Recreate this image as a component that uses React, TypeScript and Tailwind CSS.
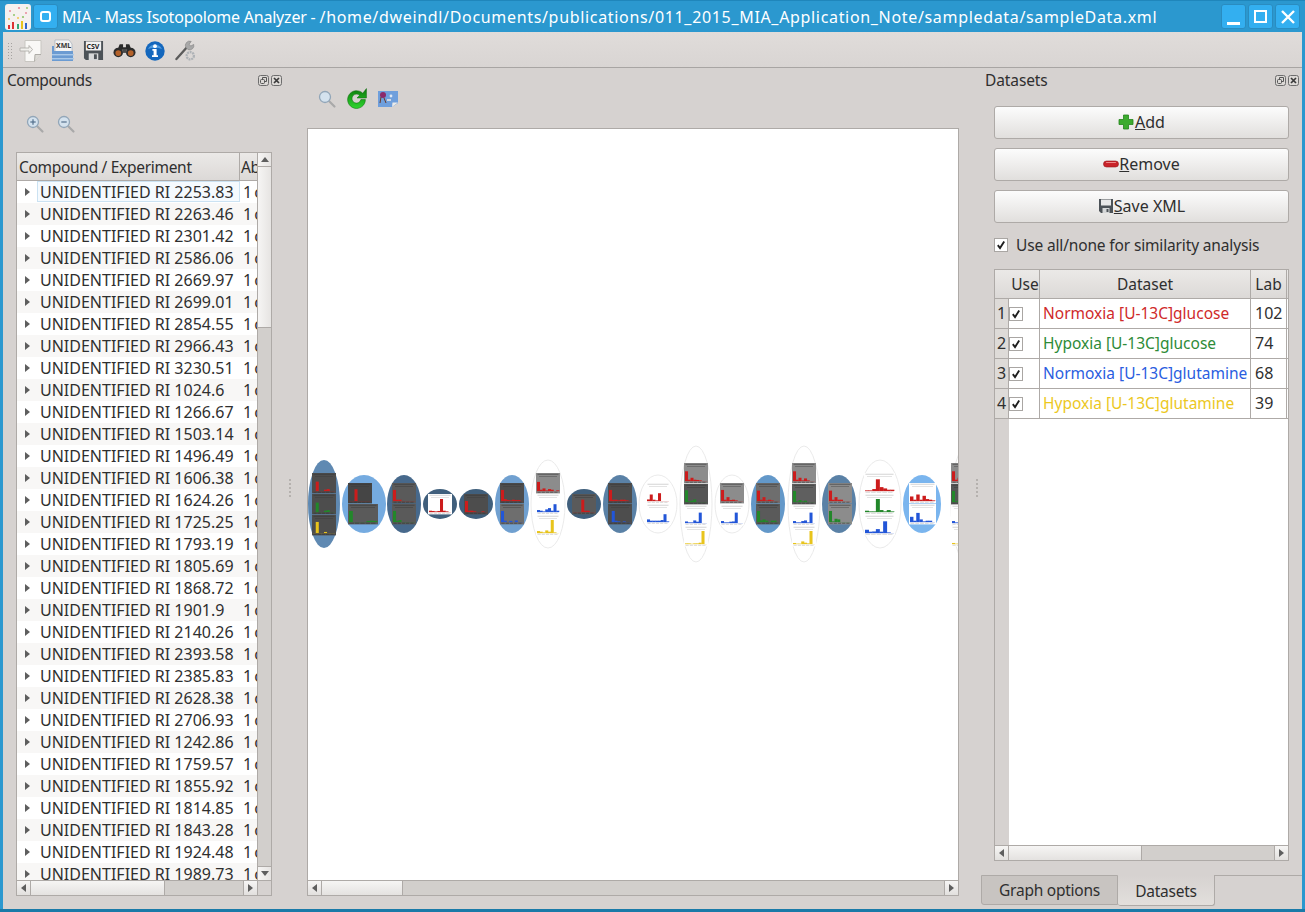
import React from "react";

const rows = ["2253.83","2263.46","2301.42","2586.06","2669.97","2699.01","2854.55","2966.43","3230.51","1024.6","1266.67","1503.14","1496.49","1606.38","1624.26","1725.25","1793.19","1805.69","1868.72","1901.9","2140.26","2393.58","2385.83","2628.38","2706.93","1242.86","1759.57","1855.92","1814.85","1843.28","1924.48","1989.73"];

const R = "#cc1f1f", G = "#23872b", B = "#2456d8", Y = "#e8c41c";
type P = { x: number; y: number; w?: number; c: string; bg: string; b: number[] };
type N = { cx: number; rx: number; ry: number; fill: string; p: P[] };
const D = "#4e4e4e", L = "#8c8c8c", W = "#ffffff", M = "#6e6e6e";
const nodes: N[] = [
  { cx: 324, rx: 16, ry: 44, fill: "#5f89b2", p: [
    { x: 312, y: 473, c: R, bg: D, b: [0, .72, 0, 0, .1, .15, 0, 0] },
    { x: 312, y: 494, c: G, bg: D, b: [0, .72, 0, 0, .1, .15, 0, 0] },
    { x: 312, y: 515, c: Y, bg: D, b: [0, .85, 0, 0, .08, 0, 0, 0] } ] },
  { cx: 364, rx: 22, ry: 29, fill: "#75abe0", p: [
    { x: 348, y: 483, c: R, bg: "#454545", b: [0, 0, .9, 0, 0, 0, 0, 0] },
    { x: 348, y: 504, w: 30, c: G, bg: "#5a5a5a", b: [.85, 0, 0, 0, 0, .08, .1, .08] } ] },
  { cx: 404, rx: 17, ry: 29, fill: "#46698c", p: [
    { x: 392, y: 483, c: R, bg: "#5a5a5a", b: [.85, .1, .1, 0, 0, 0, 0, 0] },
    { x: 392, y: 504, c: G, bg: "#5a5a5a", b: [.85, .1, .15, 0, 0, 0, 0, 0] } ] },
  { cx: 440, rx: 17, ry: 15, fill: "#3f5f7c", p: [
    { x: 428, y: 494, c: R, bg: W, b: [.1, .08, .05, .08, 1, .1, .05, 0] } ] },
  { cx: 476, rx: 17, ry: 15, fill: "#3f5f7c", p: [
    { x: 464, y: 494, c: R, bg: D, b: [.85, .1, .1, .05, 0, 0, .05, 0] } ] },
  { cx: 512, rx: 17, ry: 29, fill: "#6fa0d0", p: [
    { x: 500, y: 483, c: R, bg: D, b: [.85, .15, .08, .05, .1, .08, .08, 0] },
    { x: 500, y: 504, c: B, bg: M, b: [.85, .1, 0, .08, 0, .12, 0, 0] } ] },
  { cx: 548, rx: 17, ry: 44, fill: W, p: [
    { x: 536, y: 473, c: R, bg: L, b: [.7, .1, .2, .05, .15, .1, 0, .05] },
    { x: 536, y: 494, c: B, bg: W, b: [.15, .1, .05, .2, .3, .1, .6, .1] },
    { x: 536, y: 515, c: Y, bg: W, b: [.15, .1, .05, .2, .1, 1, .05, 0] } ] },
  { cx: 584, rx: 17, ry: 15, fill: "#3f5f7c", p: [
    { x: 572, y: 494, c: R, bg: "#5a5a5a", b: [0, 0, 0, .95, .1, .1, 0, 0] } ] },
  { cx: 620, rx: 17, ry: 29, fill: "#5a81a6", p: [
    { x: 608, y: 483, c: R, bg: D, b: [.85, .1, .1, .05, .1, .1, .05, 0] },
    { x: 608, y: 504, c: B, bg: D, b: [0, .85, .1, .05, 0, .05, 0, 0] } ] },
  { cx: 658, rx: 19, ry: 29, fill: W, p: [
    { x: 646, y: 483, c: R, bg: W, b: [.12, .5, .1, .05, .6, 0, 0, 0] },
    { x: 646, y: 504, c: B, bg: W, b: [.2, .1, .1, .1, .1, .15, .6, .05] } ] },
  { cx: 696, rx: 16, ry: 58, fill: W, p: [
    { x: 684, y: 463, c: R, bg: L, b: [.75, .1, .25, .1, .08, .05, 0, 0] },
    { x: 684, y: 484, c: G, bg: "#555555", b: [.9, .05, .1, .2, 0, 0, 0, 0] },
    { x: 684, y: 505, c: B, bg: W, b: [.12, .05, .05, .2, .1, .8, 0, 0] },
    { x: 684, y: 526, c: Y, bg: W, b: [.05, .05, .02, .05, .05, .1, 1, 0] } ] },
  { cx: 732, rx: 17, ry: 29, fill: W, p: [
    { x: 720, y: 483, c: R, bg: L, b: [.85, .1, .3, .08, .1, .05, 0, 0] },
    { x: 720, y: 505, c: B, bg: W, b: [.15, .05, .05, .1, .12, .8, 0, 0] } ] },
  { cx: 768, rx: 17, ry: 29, fill: "#6498c9", p: [
    { x: 756, y: 483, c: R, bg: M, b: [.8, .1, .3, .05, .1, .05, 0, 0] },
    { x: 756, y: 504, c: G, bg: "#5a5a5a", b: [.85, .12, .2, .1, 0, .1, .1, 0] } ] },
  { cx: 804, rx: 16, ry: 58, fill: W, p: [
    { x: 792, y: 463, c: R, bg: L, b: [.75, .1, .25, .05, .2, .05, 0, 0] },
    { x: 792, y: 484, c: G, bg: "#5f5f5f", b: [.85, .05, .15, .05, .1, 0, 0, 0] },
    { x: 792, y: 505, c: B, bg: W, b: [.15, .05, .05, .15, .2, .05, .8, 0] },
    { x: 792, y: 526, c: Y, bg: W, b: [.08, .03, .03, .2, .1, .05, 1, 0] } ] },
  { cx: 839, rx: 17, ry: 29, fill: "#5a81a6", p: [
    { x: 828, y: 483, c: R, bg: L, b: [.8, .1, .3, .1, .1, 0, 0, 0] },
    { x: 828, y: 504, c: G, bg: L, b: [.85, .05, .25, .2, 0, 0, 0, 0] } ] },
  { cx: 880, rx: 21, ry: 44, fill: W, p: [
    { x: 864, y: 473, w: 31, c: R, bg: W, b: [.05, .05, .15, .9, .3, .2, .1, .1] },
    { x: 864, y: 494, w: 31, c: G, bg: W, b: [.1, .05, .05, 1, .15, .05, .15, .05] },
    { x: 864, y: 515, w: 31, c: B, bg: W, b: [.25, .1, .12, .3, .1, .9, .05, 0] } ] },
  { cx: 922, rx: 19, ry: 29, fill: "#7ab5ee", p: [
    { x: 909, y: 483, w: 27, c: R, bg: W, b: [.35, .1, .5, .1, .4, .15, .1, .05] },
    { x: 909, y: 504, w: 27, c: B, bg: W, b: [.4, .1, .7, .2, .05, .1, .1, 0] } ] },
  { cx: 967, rx: 16, ry: 58, fill: W, p: [
    { x: 951, y: 463, c: R, bg: L, b: [.75, .1, .25, .05, .2, .05, 0, 0] },
    { x: 951, y: 484, c: G, bg: "#555555", b: [.85, .05, .15, .05, .1, 0, 0, 0] },
    { x: 951, y: 505, c: B, bg: W, b: [.15, .05, .05, .15, .2, .05, .8, 0] },
    { x: 951, y: 526, c: Y, bg: W, b: [.08, .03, .03, .2, .1, .05, 1, 0] } ] },
];

function Panel({ p }: { p: P }) {
  const w = p.w ?? 24;
  const h = 20.4;
  const dark = p.bg !== W;
  const ink = dark ? "#333333" : "#b4b4b4";
  const slot = (w - 2) / 8;
  return (
    <g>
      <rect x={p.x} y={p.y} width={w} height={h} fill={p.bg} />
      <rect x={p.x + 1.5} y={p.y + 0.8} width={w - 3} height={0.8} fill={ink} opacity={0.7} />
      <rect x={p.x + 3} y={p.y + 3} width={w - 6} height={0.7} fill={ink} opacity={0.5} />
      {p.b.map((v, i) =>
        v > 0 ? <rect key={i} x={p.x + 1 + i * slot} y={p.y + 18 - v * 13} width={slot * 1.1} height={v * 13} fill={p.c} /> : null
      )}
      <rect x={p.x + 1} y={p.y + 18} width={w - 2} height={0.4} fill={p.c} opacity={0.4} />
      {[0, 1, 2, 3, 4].map((i) => (
        <rect key={i} x={p.x + 1.5 + (i * (w - 3)) / 5} y={p.y + 18.8} width={(w - 3) / 5 - 1} height={0.8} fill={ink} opacity={0.7} />
      ))}
    </g>
  );
}

function Graph() {
  return (
    <svg viewBox="308 129 650 752" className="block w-[650px] h-[752px]">
      <defs>
        <filter id="soft" x="-5%" y="-5%" width="110%" height="110%">
          <feGaussianBlur stdDeviation="0.45" />
        </filter>
      </defs>
      <g filter="url(#soft)">
        {nodes.map((n, i) => (
          <g key={i}>
            <ellipse cx={n.cx} cy={504} rx={n.rx} ry={n.ry} fill={n.fill} stroke={n.fill === W ? "#e4e4e4" : "none"} strokeWidth={0.8} />
            {n.p.map((p, j) => <Panel key={j} p={p} />)}
          </g>
        ))}
      </g>
    </svg>
  );
}

function Tri({ dir, className = "" }: { dir: "l" | "r" | "u" | "d"; className?: string }) {
  const pts = { l: "6,1 6,9 1,5", r: "1,1 1,9 6,5", u: "1,6 9,6 5,1", d: "1,1 9,1 5,6" }[dir];
  const box = dir === "l" || dir === "r" ? "0 0 7 10" : "0 0 10 7";
  const cls = dir === "l" || dir === "r" ? "w-[7px] h-[10px]" : "w-[10px] h-[7px]";
  return (
    <svg viewBox={box} className={`${cls} ${className}`}>
      <polygon points={pts} fill="#5e5e5e" />
    </svg>
  );
}

function HScroll({ thumb }: { thumb: string }) {
  return (
    <div className="flex h-[14px] shrink-0 bg-[#d2cfcc]">
      <div className="w-[14px] flex items-center justify-center bg-gradient-to-b from-[#f6f5f4] to-[#e2e0de] border-r border-[#aeaaa7]"><Tri dir="l" /></div>
      <div className={`${thumb} bg-gradient-to-b from-[#f6f5f4] to-[#e4e2e0] border-r border-[#aeaaa7]`} />
      <div className="flex-1" />
      <div className="w-[14px] flex items-center justify-center bg-gradient-to-b from-[#f6f5f4] to-[#e2e0de] border-l border-[#aeaaa7]"><Tri dir="r" /></div>
    </div>
  );
}

function Check() {
  return (
    <div className="w-[14px] h-[14px] bg-white border border-[#a9a6a3] flex items-center justify-center shrink-0">
      <svg viewBox="0 0 10 10" className="w-[10px] h-[10px]">
        <path d="M1.8 5.2 L4 8 L8.2 1.6" fill="none" stroke="#1e1e1e" strokeWidth="1.9" />
      </svg>
    </div>
  );
}

function DockButtons() {
  return (
    <div className="flex gap-[2px]">
      <svg viewBox="0 0 11 11" className="w-[11px] h-[11px]">
        <rect x=".5" y=".5" width="10" height="10" rx="2" fill="#dcd9d6" stroke="#6d6d6d" />
        <rect x="2.5" y="4.5" width="4" height="4" rx="1" fill="none" stroke="#555" />
        <path d="M4.5 4.5 V2.5 H8.5 V6.5 H6.5" fill="none" stroke="#555" />
      </svg>
      <svg viewBox="0 0 11 11" className="w-[11px] h-[11px]">
        <rect x=".5" y=".5" width="10" height="10" rx="2" fill="#dcd9d6" stroke="#6d6d6d" />
        <path d="M3 3 L8 8 M8 3 L3 8" stroke="#3a3a3a" strokeWidth="1.7" />
      </svg>
    </div>
  );
}

function Magnifier({ sign }: { sign?: "+" | "-" }) {
  return (
    <svg viewBox="0 0 20 20" className="w-[20px] h-[20px]">
      <path d="M11.5 11.5 L17.5 17.5" stroke="#a9a9a9" strokeWidth="2.2" strokeLinecap="round" />
      <circle cx="8" cy="8" r="5.5" fill="#d4e2ee" stroke="#92a6b8" strokeWidth="1.3" />
      {sign && <path d="M5.3 8 H10.7" stroke="#52708c" strokeWidth="1.2" />}
      {sign === "+" && <path d="M8 5.3 V10.7" stroke="#52708c" strokeWidth="1.2" />}
    </svg>
  );
}

function Splitter() {
  return (
    <div className="w-[10px] shrink-0 flex flex-col items-center justify-center gap-[2px] pb-[2px]">
      {[0, 1, 2, 3, 4].map((i) => <div key={i} className="w-[2px] h-[2px] bg-[#b5b1ae]" />)}
    </div>
  );
}

function TitleBtn({ children }: { children: React.ReactNode }) {
  return (
    <div className="w-[25px] h-[25px] rounded-[3px] bg-[#33aff0] border border-[#2a8cc0] flex items-center justify-center">
      {children}
    </div>
  );
}

function PushBtn({ icon, u, rest }: { icon: React.ReactNode; u: string; rest: string }) {
  return (
    <div className="h-[33px] w-[295px] rounded-[3px] border border-[#aeaaa7] bg-gradient-to-b from-[#fcfcfc] to-[#e1dfdd] flex items-center justify-center text-[#2f2f2f] pb-[2px]">
      {icon}
      <span><u>{u}</u>{rest}</span>
    </div>
  );
}

const ds = [
  ["1", "Normoxia [U-13C]glucose", "text-[#cf2a2a]", "102"],
  ["2", "Hypoxia [U-13C]glucose", "text-[#2e8b37]", "74"],
  ["3", "Normoxia [U-13C]glutamine", "text-[#2a5de0]", "68"],
  ["4", "Hypoxia [U-13C]glutamine", "text-[#ecc81e]", "39"],
];

export default function App() {
  return (
    <div className="w-[1305px] h-[912px] overflow-hidden flex flex-col bg-[#2b98cf] border-b-[3px] border-b-[#1a7aa8] font-['Noto_Sans',sans-serif] text-[16px] leading-[22px] text-[#2f2f2f]">
      {/* title bar */}
      <div className="h-[32px] shrink-0 flex items-center pl-[5px] pr-[5px] border-t border-[#1f86bb] text-white">
        <svg viewBox="0 0 26 26" className="w-[26px] h-[26px] shrink-0">
          <rect width="26" height="26" rx="3" fill="#f5f1ef" />
          <g fill="#e88a9a"><circle cx="5" cy="7" r="1" /><circle cx="14" cy="4" r="1.1" /><circle cx="21" cy="9" r="1" /></g>
          <g fill="#8fc46a"><circle cx="9" cy="11" r="1" /><circle cx="18" cy="13" r="1.1" /><circle cx="22" cy="4" r=".9" /></g>
          <g fill="#efc34c"><circle cx="13" cy="14" r="1" /><circle cx="4" cy="15" r=".9" /></g>
          <rect x="3" y="21" width="2" height="4" fill="#d33" /><rect x="7" y="18" width="2" height="7" fill="#d33" /><rect x="12" y="20" width="2" height="5" fill="#3a7" /><rect x="16" y="17" width="2" height="8" fill="#e8c41c" /><rect x="20" y="19" width="2" height="6" fill="#36c" />
        </svg>
        <div className="ml-[2px] w-[25px] h-[25px] rounded-[3px] bg-[#33aff0] border border-[#2a8cc0] flex items-center justify-center shrink-0">
          <div className="w-[11px] h-[11px] rounded-[3px] border-[2.5px] border-white" />
        </div>
        <div className="ml-[4px] flex-1 whitespace-nowrap overflow-hidden"><span className="tracking-[-0.2px]">MIA - Mass Isotopolome Analyzer - </span><span className="tracking-[0.67px]">/home/dweindl/Documents/publications/011_2015_MIA_Application_Note/sampledata/sampleData.xml</span></div>
        <div className="flex gap-[2px] shrink-0">
          <TitleBtn><div className="w-[13px] h-[3px] bg-white mt-[13px]" /></TitleBtn>
          <TitleBtn><div className="w-[13px] h-[13px] border-2 border-white" /></TitleBtn>
          <TitleBtn>
            <svg viewBox="0 0 14 14" className="w-[14px] h-[14px]"><path d="M1 1 L13 13 M13 1 L1 13" stroke="#fff" strokeWidth="2.4" /></svg>
          </TitleBtn>
        </div>
      </div>

      {/* window body */}
      <div className="flex-1 min-h-0 mx-[3px] flex flex-col bg-[#d6d2d0]">
        {/* toolbar */}
        <div className="h-[36px] shrink-0 flex items-center bg-gradient-to-b from-[#e0dcda] to-[#d9d5d3] border-b border-[#a8a5a3] pl-[5px] pt-[2px]">
          <div className="grid gap-[2px] w-[4px] mr-[8px] shrink-0 grid-cols-[1px_1px]">
            {Array.from({ length: 12 }).map((_, i) => <div key={i} className="w-[1px] h-[1px] bg-[#a5a2a0]" />)}
          </div>
          <div className="flex items-center gap-[8px] -ml-[1px]">
            <svg viewBox="0 0 24 24" className="w-[24px] h-[24px]">
              <path d="M6 1.5 H22 V15 L15.5 22.5 H6 Z" fill="#f9f8f6" stroke="#c8c6c1" />
              <path d="M15.5 22.5 L16 15.5 H22" fill="#dcdad5" stroke="#aeaca7" />
              <path d="M1 9 H10 V6.5 L13.5 10.5 L10 14.5 V12 H1 Z" fill="#f1f0ed" stroke="#a9a7a2" strokeWidth=".8" />
            </svg>
            <svg viewBox="0 0 24 24" className="w-[24px] h-[24px]">
              <path d="M4 1 H18 L21 5 V13 H4 Z" fill="#f4f4f4" stroke="#9aa6b2" strokeWidth=".6" />
              <path d="M1 7 H3 V12 H22 V22 H1 Z" fill="#6b9bd2" />
              <rect x="1" y="15" width="22" height="1.4" fill="#a9c8e8" />
              <rect x="1" y="19" width="22" height="1.4" fill="#a9c8e8" />
              <text x="5" y="9" fontSize="7" fontWeight="700" fill="#333">XML</text>
            </svg>
            <svg viewBox="0 0 22 22" className="w-[21px] h-[21px]">
              <path d="M1 1 H21 V21 H3 L1 19 Z" fill="#4c5257" />
              <rect x="3" y="1.5" width="16" height="9.5" fill="#f2f2f2" />
              <rect x="6" y="14" width="10" height="7" fill="#d7d9da" />
              <rect x="11.5" y="15" width="3" height="5" fill="#4c5257" />
              <text x="3.6" y="9.2" fontSize="7.4" fontWeight="700" fill="#222">CSV</text>
            </svg>
            <svg viewBox="0 0 24 15" className="w-[23px] h-[15px] ml-[1px]">
              <path d="M7 1 H10.5 V4 H13.5 V1 H17 L19 6 L12 7 L5 6 Z" fill="#2a2a2a" />
              <circle cx="5.5" cy="9.5" r="5" fill="#2c2c2c" />
              <circle cx="18.5" cy="9.5" r="5" fill="#2c2c2c" />
              <circle cx="5.5" cy="10.2" r="3" fill="#b5622a" />
              <circle cx="18.5" cy="10.2" r="3" fill="#b5622a" />
              <rect x="10" y="6" width="4" height="4" fill="#4a4a4a" />
            </svg>
            <svg viewBox="0 0 20 20" className="w-[20px] h-[20px] ml-[1px]">
              <circle cx="10" cy="10" r="9.7" fill="#1467bd" />
              <path d="M3 8 A8 8 0 0 1 17 8 A12 6 0 0 0 3 8Z" fill="#4f9ade" />
              <circle cx="10" cy="5.2" r="1.9" fill="#fff" />
              <path d="M7.4 8 H11.6 V14.2 H13 V16 H7 V14.2 H8.6 V9.8 H7.4Z" fill="#fff" />
            </svg>
            <svg viewBox="0 0 22 22" className="w-[21px] h-[21px] ml-[2px]">
              <path d="M1.5 20 L12.5 7.5" stroke="#5b5b5b" strokeWidth="2.4" strokeLinecap="round" />
              <path d="M11.5 8 A4.5 4.5 0 0 1 17 1.5 L14.8 4.4 L16.5 6.4 L19.6 4.6 A4.5 4.5 0 0 1 13.5 10Z" fill="#a8a8a8" stroke="#7e7e7e" strokeWidth=".6" />
              <circle cx="16" cy="16.5" r="3.8" fill="none" stroke="#aeb2b6" strokeWidth="2.4" strokeDasharray="2 .8" />
            </svg>
          </div>
        </div>

        {/* docks */}
        <div className="flex-1 min-h-0 flex">
          {/* compounds dock */}
          <div className="w-[282px] shrink-0 flex flex-col">
            <div className="h-[24px] shrink-0 flex items-center justify-between pl-[4px] pr-[3px] text-[15.5px] tracking-[-0.45px]">
              <span>Compounds</span>
              <DockButtons />
            </div>
            <div className="h-[60px] shrink-0 flex items-center gap-[11px] pl-[22px] pt-[4px]">
              <Magnifier sign="+" />
              <Magnifier sign="-" />
            </div>
            <div className="ml-[13px] w-[256px] h-[744px] shrink-0 border border-[#aeaaa7] flex flex-col bg-white">
              <div className="flex-1 min-h-0 flex">
                <div className="flex-1 min-w-0 flex flex-col overflow-hidden">
                  <div className="h-[28px] shrink-0 flex bg-gradient-to-b from-[#ebe9e7] to-[#dcd9d7] border-b border-[#aeaaa7] text-[15.5px] tracking-[-0.3px]">
                    <div className="w-[223px] shrink-0 border-r border-[#aeaaa7] pl-[2px] flex items-center">Compound / Experiment</div>
                    <div className="flex-1 overflow-hidden pl-[1px] flex items-center whitespace-nowrap">Abundance</div>
                  </div>
                  <div className="flex-1 min-h-0 overflow-hidden">
                    {rows.map((r, i) => (
                      <div key={r} className={`h-[22px] flex ${i % 2 ? "bg-[#f8f7f6]" : "bg-white"}`}>
                        <div className="w-[20px] shrink-0 flex items-center justify-center"><Tri dir="r" /></div>
                        <div className="w-[203px] shrink-0 pl-[3px] whitespace-nowrap">
                          {i === 0 ? (
                            <div className="-ml-[3px] pl-[2px] h-[21px] border border-[#cbe2f2] bg-[#f5fafe] leading-[20px]">UNIDENTIFIED RI {r}</div>
                          ) : (
                            <>UNIDENTIFIED RI {r}</>
                          )}
                        </div>
                        <div className="flex-1 overflow-hidden pl-[3px] whitespace-nowrap tracking-[-1px]">1 of 3</div>
                      </div>
                    ))}
                  </div>
                </div>
                <div className="w-[14px] shrink-0 flex flex-col border-l border-[#aeaaa7] bg-[#d2cfcc]">
                  <div className="h-[14px] shrink-0 flex items-center justify-center bg-gradient-to-r from-[#f6f5f4] to-[#e6e4e2] border-b border-[#aeaaa7]"><Tri dir="u" /></div>
                  <div className="h-[161px] shrink-0 bg-gradient-to-r from-[#f6f5f4] to-[#e6e4e2] border-b border-[#aeaaa7]" />
                  <div className="flex-1" />
                  <div className="h-[14px] shrink-0 flex items-center justify-center bg-gradient-to-r from-[#f6f5f4] to-[#e6e4e2] border-t border-[#aeaaa7]"><Tri dir="d" /></div>
                </div>
              </div>
              <div className="flex border-t border-[#aeaaa7] bg-[#d6d2d0]">
                <div className="w-[240px] shrink-0"><HScroll thumb="w-[134px]" /></div>
                <div className="flex-1 border-l border-[#aeaaa7]" />
              </div>
            </div>
          </div>

          <Splitter />

          {/* centre */}
          <div className="w-[677px] shrink-0 flex flex-col pl-[12px]">
            <div className="h-[60px] shrink-0 flex items-center gap-[8px] pl-[10px] pt-[1px]">
              <Magnifier />
              <svg viewBox="0 0 22 22" className="w-[23px] h-[23px]">
                <defs>
                  <linearGradient id="rl" x1="0" y1="0" x2="0" y2="1">
                    <stop offset="0" stopColor="#0c7a0c" />
                    <stop offset="1" stopColor="#2fd62f" />
                  </linearGradient>
                </defs>
                <path d="M17 6 A8.5 8.5 0 1 0 19.5 12 H15.2 A4.3 4.3 0 1 1 14 8 L11.5 10.5 H20.5 V1.5 Z" fill="url(#rl)" stroke="#0a6b0a" strokeWidth=".5" />
              </svg>
              <svg viewBox="0 0 22 20" className="w-[22px] h-[20px] ml-[1px]">
                <path d="M1 2 H21 V14 L15 18 H1 Z" fill="#6f9fdc" />
                <path d="M15 18 L15.5 13.5 H21 Z" fill="#ecebe8" />
                <circle cx="6" cy="6" r="3" fill="#8c2a6a" />
                <path d="M4 8 L3 14 M7 9 L9 14" stroke="#6a3a2a" strokeWidth="1" />
                <circle cx="14" cy="7" r="1.4" fill="#dfe8f3" />
                <rect x="10" y="10" width="4" height="2" fill="#cfd7e2" />
              </svg>
            </div>
            <div className="w-[652px] h-[768px] shrink-0 border border-[#aeaaa7] flex flex-col bg-white">
              <div className="flex-1 min-h-0 overflow-hidden"><Graph /></div>
              <div className="border-t border-[#aeaaa7]"><HScroll thumb="w-[81px]" /></div>
            </div>
          </div>

          <Splitter />

          {/* datasets dock */}
          <div className="flex-1 min-w-0 flex flex-col">
            <div className="h-[24px] shrink-0 flex items-center justify-between pl-[3px] pr-[3px]">
              <span className="text-[15.5px] tracking-[-0.1px]">Datasets</span>
              <DockButtons />
            </div>
            <div className="pl-[12px] flex flex-col gap-[9px] pt-[14px] shrink-0">
              <PushBtn
                u="A"
                rest="dd"
                icon={
                  <svg viewBox="0 0 16 16" className="w-[16px] h-[16px] mr-[1px]">
                    <path d="M5.5 1 H10.5 V5.5 H15 V10.5 H10.5 V15 H5.5 V10.5 H1 V5.5 H5.5 Z" fill="#3cab2e" stroke="#23841c" strokeWidth=".8" strokeLinejoin="round" />
                  </svg>
                }
              />
              <PushBtn
                u="R"
                rest="emove"
                icon={
                  <svg viewBox="0 0 16 8" className="w-[16px] h-[8px]">
                    <rect x=".5" y="1" width="15" height="6" rx="3" fill="#c9232a" stroke="#96181c" strokeWidth=".6" />
                    <rect x="3" y="2" width="10" height="1" rx=".5" fill="#ee8a8a" />
                  </svg>
                }
              />
              <PushBtn
                u="S"
                rest="ave XML"
                icon={
                  <svg viewBox="0 0 16 16" className="w-[16px] h-[16px]">
                    <path d="M1 1 H15 V15 H3 L1 13 Z" fill="#4c5257" />
                    <rect x="3" y="1.5" width="10" height="6" fill="#e8e8e8" />
                    <rect x="4.5" y="10" width="7" height="5" fill="#d5d7d8" />
                    <rect x="8.5" y="11" width="2" height="3" fill="#4c5257" />
                  </svg>
                }
              />
            </div>
            <div className="pl-[12px] h-[36px] mt-[4px] flex items-center gap-[8px] shrink-0 text-[15.5px] tracking-[-0.15px]">
              <Check />
              <span className="pb-[1px]">Use all/none for similarity analysis</span>
            </div>
            <div className="ml-[12px] w-[295px] h-[592px] mt-[6px] shrink-0 border border-[#aeaaa7] flex flex-col bg-white">
              <div className="h-[29px] shrink-0 flex bg-gradient-to-b from-[#ebe9e7] to-[#dcd9d7] border-b border-[#aeaaa7] text-[15.5px]">
                <div className="w-[14px] shrink-0" />
                <div className="w-[31px] shrink-0 border-r border-[#aeaaa7] flex items-center justify-center pl-[2px]">Use</div>
                <div className="w-[211px] shrink-0 border-r border-[#aeaaa7] flex items-center justify-center">Dataset</div>
                <div className="w-[36px] shrink-0 border-r border-[#aeaaa7] flex items-center justify-center">Lab</div>
              </div>
              {ds.map(([n, name, color, lab]) => (
                <div key={n} className="h-[30px] shrink-0 flex border-b border-[#aeaaa7]">
                  <div className="w-[14px] shrink-0 bg-[#dedbd8] border-r border-[#aeaaa7] flex items-center justify-center pb-[2px]">{n}</div>
                  <div className="w-[31px] shrink-0 border-r border-[#aeaaa7] flex items-center"><Check /></div>
                  <div className={`w-[211px] shrink-0 border-r border-[#aeaaa7] flex items-center pl-[3px] pb-[2px] whitespace-nowrap text-[15.5px] ${color}`}>{name}</div>
                  <div className="w-[36px] shrink-0 border-r border-[#aeaaa7] flex items-center pl-[4px] pb-[2px]">{lab}</div>
                </div>
              ))}
              <div className="flex-1 min-h-0 flex">
                <div className="w-[14px] shrink-0 bg-[#d6d2d0]" />
                <div className="flex-1" />
              </div>
              <div className="border-t border-[#aeaaa7]"><HScroll thumb="w-[133px]" /></div>
            </div>
            {/* tabs */}
            <div className="mt-[14px] -ml-[1px] flex-1 min-h-0 flex items-start text-[15.5px] tracking-[-0.25px]">
              <div className="w-[137px] h-[30px] rounded-bl-[3px] border border-[#aeaaa7] bg-[#c8c4c1] flex items-center justify-center">Graph options</div>
              <div className="w-[97px] h-[31px] rounded-b-[3px] border-r border-b border-[#aeaaa7] bg-gradient-to-b from-[#d6d2d0] to-[#e2dfdc] flex items-center justify-center pt-[1px]">Datasets</div>
              <div className="flex-1 border-t border-[#aeaaa7]" />
            </div>
          </div>
        </div>
      </div>
    </div>
  );
}
